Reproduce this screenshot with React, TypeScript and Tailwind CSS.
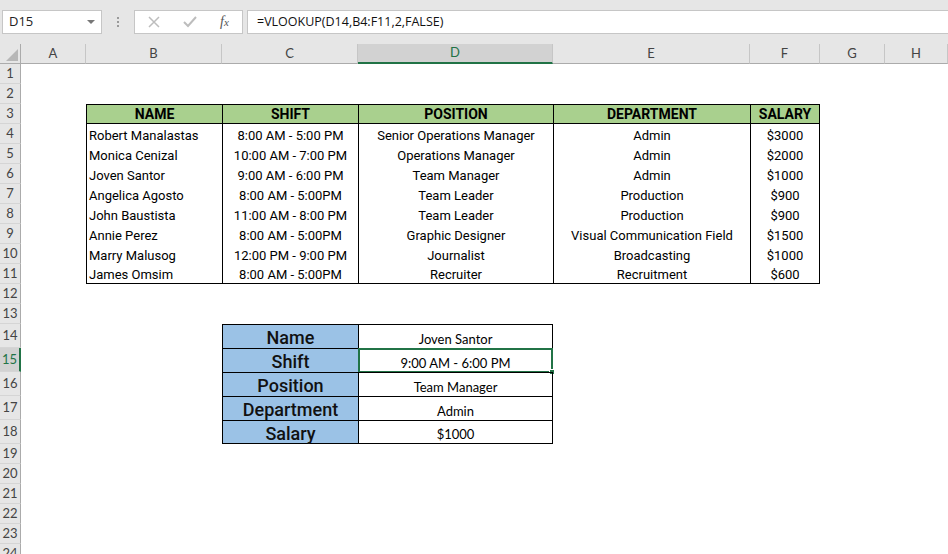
import React from 'react';

const W = ['w-[21px]', 'w-[65px]', 'w-[136px]', 'w-[136px]', 'w-[195px]', 'w-[197px]', 'w-[70px]', 'w-[65px]', 'flex-1'];
const COLS = ['A', 'B', 'C', 'D', 'E', 'F', 'G', 'H'];

const data = [
  ['Robert Manalastas', '8:00 AM - 5:00 PM', 'Senior Operations Manager', 'Admin', '$3000'],
  ['Monica Cenizal', '10:00 AM - 7:00 PM', 'Operations Manager', 'Admin', '$2000'],
  ['Joven Santor', '9:00 AM - 6:00 PM', 'Team Manager', 'Admin', '$1000'],
  ['Angelica Agosto', '8:00 AM - 5:00PM', 'Team Leader', 'Production', '$900'],
  ['John Baustista', '11:00 AM - 8:00 PM', 'Team Leader', 'Production', '$900'],
  ['Annie Perez', '8:00 AM - 5:00PM', 'Graphic Designer', 'Visual Communication Field', '$1500'],
  ['Marry Malusog', '12:00 PM - 9:00 PM', 'Journalist', 'Broadcasting', '$1000'],
  ['James Omsim', '8:00 AM - 5:00PM', 'Recruiter', 'Recruitment', '$600'],
];

const lookup = [
  ['Name', 'Joven Santor'],
  ['Shift', '9:00 AM - 6:00 PM'],
  ['Position', 'Team Manager'],
  ['Department', 'Admin'],
  ['Salary', '$1000'],
];

const din = { fontFamily: 'Roboto, "Noto Sans", sans-serif' };
const cal = { fontFamily: 'Lato, "Liberation Sans", sans-serif' };

function RowHeader({ n, h, selected }: { n: number; h: string; selected?: boolean }) {
  return (
    <div
      className={`${W[0]} ${h} shrink-0 flex items-center justify-center border-b border-[#d5d5d5] ${
        selected ? 'bg-[#d2d2d2] text-[#217346] border-r-2 border-r-[#217346]' : 'bg-[#e6e6e6] text-[#444] border-r border-r-[#ababab]'
      } text-[13px]`}
      style={cal}
    >
      {n}
    </div>
  );
}

function Empty({ i, h }: { i: number; h: string }) {
  return <div className={`${W[i]} ${h} shrink-0`} />;
}

export default function App() {
  const rows: React.ReactNode[] = [];
  for (let r = 1; r <= 24; r++) {
    const h = r >= 14 && r <= 18 ? 'h-[24px]' : 'h-[20px]';
    const cells: React.ReactNode[] = [<RowHeader key="rh" n={r} h={h} selected={r === 15} />];
    if (r === 3) {
      cells.push(<Empty key="a" i={1} h={h} />);
      ['NAME', 'SHIFT', 'POSITION', 'DEPARTMENT', 'SALARY'].forEach((t, k) => {
        cells.push(
          <div
            key={t}
            className={`${W[k + 2]} ${h} shrink-0 bg-[#a9d08e] border-t border-b border-l border-black ${
              k === 4 ? 'border-r' : ''
            } flex items-center justify-center pt-[1px] text-[14px] font-bold text-black`}
            style={din}
          >
            {t}
          </div>
        );
      });
      cells.push(<Empty key="g" i={7} h={h} />);
      cells.push(<Empty key="h" i={8} h={h} />);
    } else if (r >= 4 && r <= 11) {
      const d = data[r - 4];
      cells.push(<Empty key="a" i={1} h={h} />);
      d.forEach((t, k) => {
        cells.push(
          <div
            key={k}
            className={`${W[k + 2]} ${h} shrink-0 border-l border-black ${k === 4 ? 'border-r' : ''} ${
              r === 11 ? 'border-b pt-[2px]' : 'pt-[3px]'
            } flex items-center ${k === 0 ? 'justify-start pl-[2px]' : 'justify-center'} text-[13px] font-normal text-black whitespace-nowrap`}
            style={din}
          >
            {t}
          </div>
        );
      });
      cells.push(<Empty key="g" i={7} h={h} />);
      cells.push(<Empty key="h" i={8} h={h} />);
    } else if (r >= 14 && r <= 18) {
      const [label, val] = lookup[r - 14];
      cells.push(<Empty key="a" i={1} h={h} />);
      cells.push(<Empty key="b" i={2} h={h} />);
      cells.push(
        <div
          key="c"
          className={`${W[3]} ${h} shrink-0 bg-[#9bc2e6] border-l border-t border-black ${r === 18 ? 'border-b' : ''} flex items-center justify-center pt-[2px] text-[18px] font-medium text-[#111]`}
          style={din}
        >
          {label}
        </div>
      );
      cells.push(
        <div
          key="d"
          className={`${W[4]} ${h} shrink-0 relative border-l border-t border-r border-black ${r === 18 ? 'border-b' : ''} flex items-center justify-center pt-[6px] text-[13px] text-black`}
          style={cal}
        >
          {val}
          {r === 15 && (
            <div className="absolute left-[-1px] top-[-1px] right-[-1px] bottom-[-1px] border-2 border-[#217346]">
              <div className="absolute right-[-4px] bottom-[-4px] w-[6px] h-[6px] bg-[#217346] border border-white" />
            </div>
          )}
        </div>
      );
      cells.push(<Empty key="e" i={5} h={h} />);
      cells.push(<Empty key="f" i={6} h={h} />);
      cells.push(<Empty key="g" i={7} h={h} />);
      cells.push(<Empty key="h" i={8} h={h} />);
    } else {
      for (let i = 1; i < 9; i++) cells.push(<Empty key={i} i={i} h={h} />);
    }
    rows.push(
      <div key={r} className="flex">
        {cells}
      </div>
    );
  }

  return (
    <div className="w-[948px] h-[554px] overflow-hidden bg-white flex flex-col">
      {/* formula bar */}
      <div className="h-[44px] shrink-0 bg-[#e6e6e6] flex items-start pt-[10px] pl-[2px]">
        <div
          className="w-[100px] h-[24px] bg-white border border-[#c6c6c6] flex items-center justify-between pl-[6px] pr-[6px] text-[13px] text-[#222]"
          style={{ fontFamily: '"Open Sans", "Noto Sans", sans-serif' }}
        >
          <span>D15</span>
          <svg width="8" height="5" viewBox="0 0 8 5">
            <path d="M0 0 L8 0 L4 4 Z" fill="#777" />
          </svg>
        </div>
        <div className="w-[32px] h-[24px] flex flex-col items-center justify-center gap-[2px]">
          <div className="w-[2px] h-[2px] bg-[#9a9a9a]" />
          <div className="w-[2px] h-[2px] bg-[#9a9a9a]" />
          <div className="w-[2px] h-[2px] bg-[#9a9a9a]" />
        </div>
        <div className="w-[109px] h-[24px] bg-white border border-[#c6c6c6] flex items-center">
          <div className="w-[38px] flex justify-center">
            <svg width="12" height="12" viewBox="0 0 12 12">
              <path d="M1 1 L11 11 M11 1 L1 11" stroke="#bdbdbd" strokeWidth="1.5" />
            </svg>
          </div>
          <div className="w-[34px] flex justify-center">
            <svg width="14" height="12" viewBox="0 0 14 12">
              <path d="M1 6 L5 10 L13 1" stroke="#bdbdbd" strokeWidth="2" fill="none" />
            </svg>
          </div>
          <div className="flex-1 flex justify-center">
            <span className="italic text-[#555] text-[14px] leading-none" style={{ fontFamily: '"Liberation Serif", serif' }}>
              f<span className="text-[11px]">x</span>
            </span>
          </div>
        </div>
        <div
          className="flex-1 ml-[4px] h-[24px] bg-white border border-[#c6c6c6] border-r-0 flex items-center pl-[9px] text-[12.5px] text-[#111]"
          style={{ fontFamily: '"Open Sans", "Noto Sans", sans-serif' }}
        >
          =VLOOKUP(D14,B4:F11,2,FALSE)
        </div>
      </div>
      {/* column headers */}
      <div className="flex h-[20px] shrink-0 bg-[#e6e6e6]">
        <div className={`${W[0]} h-[20px] shrink-0 relative border-r border-b border-[#ababab]`}>
          <svg className="absolute right-[2px] bottom-[2px]" width="12" height="12" viewBox="0 0 12 12">
            <path d="M12 0 L12 12 L0 12 Z" fill="#b7b7b7" />
          </svg>
        </div>
        {COLS.map((c, i) => (
          <div
            key={c}
            className={`${W[i + 1]} h-[20px] shrink-0 flex items-center justify-center text-[13px] ${
              c === 'D'
                ? 'bg-[#d2d2d2] border-b-2 border-[#217346] text-[#217346] border-r border-r-[#c6c6c6]'
                : 'border-b border-[#ababab] text-[#444] border-r border-r-[#c6c6c6]'
            }`}
            style={cal}
          >
            {c}
          </div>
        ))}
      </div>
      {rows}
    </div>
  );
}
